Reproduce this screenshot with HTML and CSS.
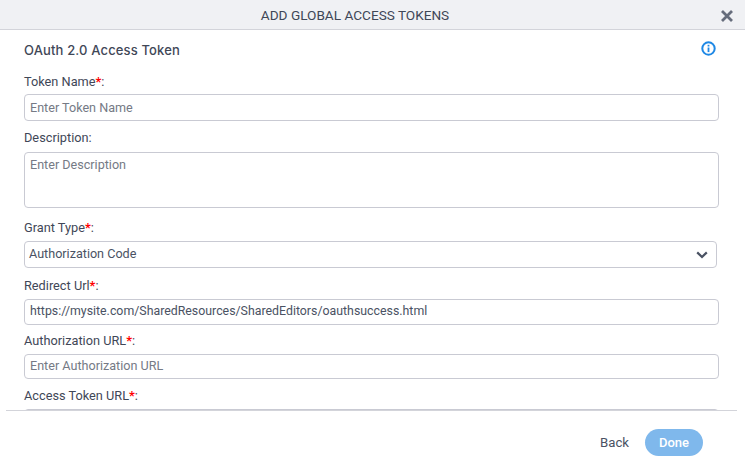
FILE: index.html
```html
<!DOCTYPE html>
<html lang="en">

<head>
    <meta charset="UTF-8">
    <meta name="viewport" content="width=device-width, initial-scale=1.0">
    <title>Add Global Access Tokens</title>
    <link rel="stylesheet" href="styles.css">
</head>

<body>
    <div class="dialog">
        <div class="dialog_header">
            <span class="dialog_title">ADD GLOBAL ACCESS TOKENS</span>
            <svg class="close_icon" width="14" height="14" viewBox="0 0 14 14">
                <path d="M2 2 L12 12 M12 2 L2 12" stroke="#666d7c" stroke-width="2.8" fill="none" />
            </svg>
        </div>

        <div class="dialog_body">
            <div class="section_row">
                <h2>OAuth 2.0 Access Token</h2>
                <svg class="info_icon" width="15" height="15" viewBox="0 0 15 15">
                    <circle cx="7.5" cy="7.5" r="6.2" stroke="#1e88e5" stroke-width="2" fill="none" />
                    <rect x="6.6" y="6.5" width="1.8" height="4.6" fill="#1e88e5" />
                    <rect x="6.6" y="3.8" width="1.8" height="1.7" fill="#1e88e5" />
                </svg>
            </div>

            <form>
                <label for="token_name" class="label_close">Token Name<span class="req">*</span>:</label>
                <input type="text" id="token_name" placeholder="Enter Token Name">

                <label for="description" class="label_far">Description:</label>
                <textarea id="description" placeholder="Enter Description"></textarea>

                <label for="grant_type">Grant Type<span class="req">*</span>:</label>
                <div class="select_box" id="grant_type">
                    <span>Authorization Code</span>
                    <svg width="12" height="8" viewBox="0 0 12 8">
                        <path d="M1.2 1.4 L6 6 L10.8 1.4" stroke="#4a5263" stroke-width="2.2" fill="none" />
                    </svg>
                </div>

                <label for="redirect_url">Redirect Url<span class="req">*</span>:</label>
                <input type="text" id="redirect_url" class="filled" value="https://mysite.com/SharedResources/SharedEditors/oauthsuccess.html">

                <label for="auth_url">Authorization URL<span class="req">*</span>:</label>
                <input type="text" id="auth_url" class="short" placeholder="Enter Authorization URL">

                <label for="token_url">Access Token URL<span class="req">*</span>:</label>
                <input type="text" id="token_url" placeholder="Enter Access Token URL">
            </form>
        </div>

        <div class="dialog_footer">
            <a class="back_btn">Back</a>
            <button type="button" class="done_btn">Done</button>
        </div>
    </div>
</body>

</html>
```

FILE: styles.css
```css
body {
    font-family: Roboto, Arial, sans-serif;
    margin: 0;
    background-color: white;
}

.dialog {
    width: 745px;
    height: 470px;
    display: flex;
    flex-direction: column;
    overflow: hidden;
}

.dialog_header {
    height: 29px;
    flex-shrink: 0;
    display: flex;
    align-items: center;
    justify-content: center;
    padding-right: 35px;
    position: relative;
    background-color: #f0f1f4;
    border-bottom: 1px solid #d3d4da;
}

.dialog_title {
    font-size: 13.6px;
    color: #3f4757;
}

.close_icon {
    position: absolute;
    right: 11px;
    top: 9px;
}

.dialog_body {
    height: 380px;
    flex-shrink: 0;
    padding: 0 26px 0 24px;
    overflow: hidden;
    box-sizing: border-box;
}

.section_row {
    display: flex;
    justify-content: space-between;
    align-items: center;
    height: 40px;
    margin-bottom: 4px;
    padding-right: 3px;
}

h2 {
    margin: 0;
    font-family: Inter, Roboto, sans-serif;
    font-size: 13px;
    font-weight: 500;
    letter-spacing: 0.15px;
    color: #3f4757;
}

.info_icon {
    position: relative;
    top: -2px;
}

label {
    display: block;
    height: 15px;
    line-height: 15px;
    margin-bottom: 6px;
    font-size: 12.75px;
    color: #3f4757;
}

.label_close {
    margin-bottom: 5px;
}

.label_far {
    margin-bottom: 7px;
}

.req {
    color: #f00;
    font-weight: 700;
}

input,
textarea,
.select_box {
    display: block;
    width: 100%;
    box-sizing: border-box;
    margin: 0 0 9px 0;
    padding: 0 5px;
    font-family: Roboto, Arial, sans-serif;
    font-size: 12.6px;
    color: #4a5263;
    background-color: white;
    border: 1px solid #c9cad3;
    border-radius: 4px;
    outline: none;
}

input {
    height: 27px;
}

input.filled {
    height: 26px;
    margin-bottom: 8px;
    padding-bottom: 2px;
    font-size: 12.35px;
}

input.short {
    height: 25px;
    padding-bottom: 2px;
}

textarea {
    height: 56px;
    margin-bottom: 12px;
    padding-top: 4px;
    resize: none;
}

input::placeholder,
textarea::placeholder {
    color: #757a85;
}

.select_box {
    width: 693px;
    height: 27px;
    margin-bottom: 10px;
    display: flex;
    align-items: center;
    justify-content: space-between;
    padding: 0 8px 2px 4px;
}

.select_box svg {
    position: relative;
    top: 1px;
}

.dialog_footer {
    flex: 1;
    display: flex;
    justify-content: flex-end;
    align-items: center;
    gap: 16px;
    margin: 0 8px 0 6px;
    padding: 4px 34px 0 0;
    border-top: 1px solid #d3d4da;
}

.back_btn {
    font-size: 13.2px;
    color: #4a5263;
}

.done_btn {
    width: 58px;
    height: 27px;
    padding: 0;
    font-family: Roboto, Arial, sans-serif;
    font-size: 13px;
    font-weight: 500;
    color: white;
    background-color: #7fb8ec;
    border: none;
    border-radius: 14px;
}
```
